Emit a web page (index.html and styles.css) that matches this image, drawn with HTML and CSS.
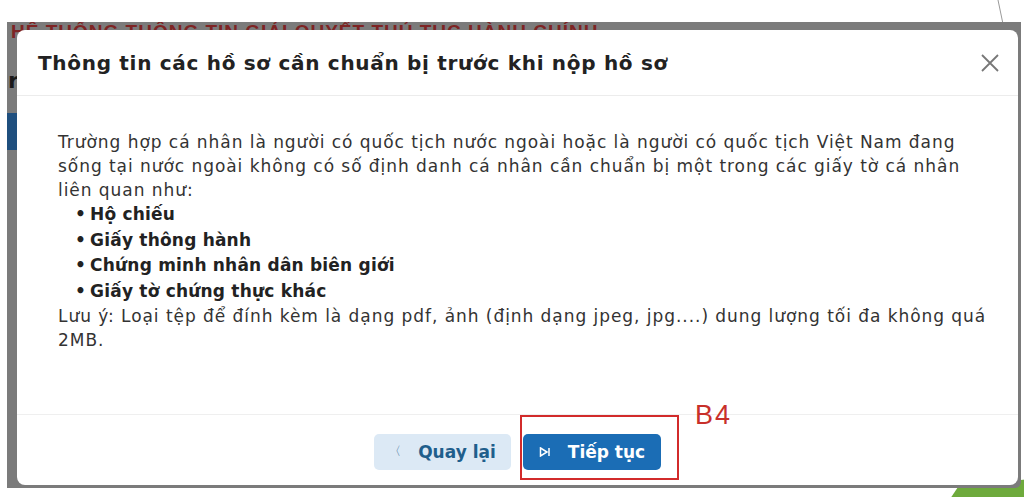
FILE: index.html
```html
<!DOCTYPE html>
<html lang="vi">
<head>
  <meta charset="UTF-8">
  <title>Thông tin hồ sơ</title>
  <meta name="viewport" content="width=device-width, initial-scale=1.0"/>
  <link rel="stylesheet" href="styles.css">
</head>
<body>
  <svg class="deco-line" width="30" height="30" viewBox="0 0 30 30"><line x1="8" y1="0" x2="13" y2="24" stroke="#9a9a9a" stroke-width="1"/></svg>
  <svg class="deco-green" width="80" height="20" viewBox="0 0 80 20"><polygon points="0,20 8,8 80,0 80,20" fill="#6eaa3c"/></svg>

  <div class="shot">
    <div class="behind-title">HỆ THỐNG THÔNG TIN GIẢI QUYẾT THỦ TỤC HÀNH CHÍNH</div>
    <div class="behind-r">r</div>
    <div class="behind-blue"></div>

    <div class="modal">
      <div class="modal-head">
        <h2>Thông tin các hồ sơ cần chuẩn bị trước khi nộp hồ sơ</h2>
        <svg class="close" width="20" height="20" viewBox="0 0 20 20"><path d="M2 2 L18 18 M18 2 L2 18" stroke="#777" stroke-width="1.8" fill="none"/></svg>
      </div>

      <div class="modal-body">
        <p>Trường hợp cá nhân là người có quốc tịch nước ngoài hoặc là người có quốc tịch Việt Nam đang sống tại nước ngoài không có số định danh cá nhân cần chuẩn bị một trong các giấy tờ cá nhân liên quan như:</p>
        <ul>
          <li>Hộ chiếu</li>
          <li>Giấy thông hành</li>
          <li>Chứng minh nhân dân biên giới</li>
          <li>Giấy tờ chứng thực khác</li>
        </ul>
        <p>Lưu ý: Loại tệp để đính kèm là dạng pdf, ảnh (định dạng jpeg, jpg....) dung lượng tối đa không quá 2MB.</p>
      </div>

      <div class="modal-foot">
        <button class="btn btn-back"><span class="ico">〈</span> Quay lại</button>
        <div class="next-wrap">
          <button class="btn btn-next">
            <svg width="12" height="10" viewBox="0 0 12 10"><path d="M1.5 1 L8 5 L1.5 9 Z M10 1 V9" stroke="#fff" stroke-width="1.5" fill="none"/></svg>
            Tiếp tục
          </button>
          <span class="mark"></span>
          <span class="mark-label">B4</span>
        </div>
      </div>
    </div>
  </div>
</body>
</html>
```

FILE: styles.css
```css
body { margin: 0; background: #fff; font-family: "DejaVu Sans", Verdana, sans-serif; }

.deco-line { position: absolute; left: 990px; top: 0; }
.deco-green { position: absolute; left: 950px; top: 479px; }

.shot { position: relative; margin: 22px 0 0 7px; width: 1014px; height: 466px; background: #7b7b7b; padding: 8px 3px 0 10px; box-sizing: border-box; overflow: hidden; border-radius: 0 0 6px 0; }
.behind-title { position: absolute; left: 4px; top: 0; color: #7e2424; font-family: "Liberation Sans", Arial, sans-serif; font-weight: bold; font-size: 19px; line-height: 20px; letter-spacing: 1px; white-space: nowrap; }
.behind-r { position: absolute; left: 1px; top: 46px; color: #1a1a1a; font-size: 22px; font-weight: bold; }
.behind-blue { position: absolute; left: 0; top: 91px; width: 10px; height: 37px; background: #1f4f7e; }

.modal { position: relative; z-index: 1; background: #fff; border-radius: 8px; height: 455px; display: flex; flex-direction: column; }

.modal-head { display: flex; align-items: center; justify-content: space-between; height: 65px; padding: 0 18px 0 21px; border-bottom: 1px solid #ececec; }
.modal-head h2 { margin: 0; font-size: 20px; font-weight: bold; color: #222; letter-spacing: 0.7px; }
.close { margin-top: 1px; }

.modal-body { flex: 1; padding: 34px 22px 0 41px; color: #333; font-size: 17px; line-height: 24px; letter-spacing: 0.95px; }
.modal-body p { margin: 0; }
.modal-body ul { list-style: none; margin: 0; padding: 0 0 0 17px; }
.modal-body li { font-weight: bold; color: #222; line-height: 25.5px; letter-spacing: 0.2px; }
.modal-body li::before { content: "•"; margin-right: 4px; }

.modal-foot { display: flex; justify-content: center; align-items: center; gap: 12px; height: 70px; border-top: 1px solid #efefef; }
.btn { height: 36px; border: none; border-radius: 5px; font-family: inherit; font-size: 17px; font-weight: bold; display: flex; align-items: center; justify-content: center; gap: 17px; margin-top: 3px; }
.btn-back { width: 137px; background: #dce9f5; color: #1f5e8c; }
.btn-back .ico { font-weight: normal; font-size: 12px; color: #3a6d96; }
.btn-next { width: 138px; background: #1b6db5; color: #fff; }

.next-wrap { position: relative; }
.mark { position: absolute; left: -3px; top: -16px; width: 155px; height: 61px; border: 2px solid #d22b2b; }
.mark-label { position: absolute; left: 172px; top: -31px; color: #c8302a; font-family: "Liberation Sans", Arial, sans-serif; font-size: 27px; letter-spacing: 2px; }
```
